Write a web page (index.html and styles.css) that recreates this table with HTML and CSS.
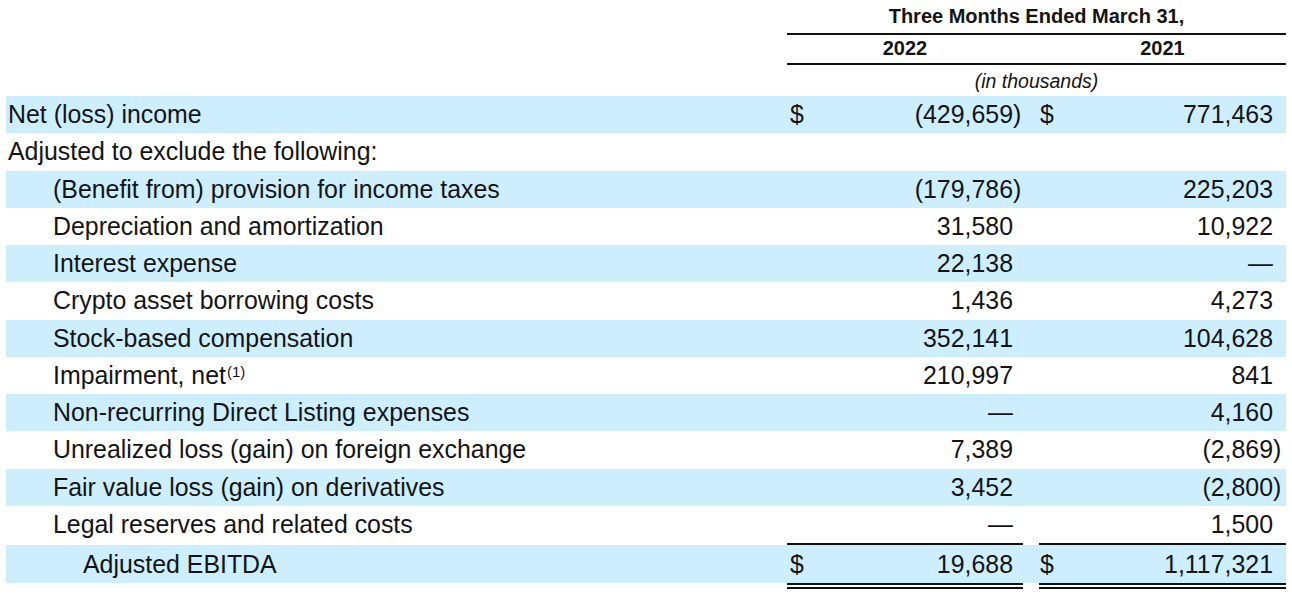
FILE: index.html
```html
<!DOCTYPE html>
<html lang="en">
<head>
<meta charset="utf-8">
<title>Adjusted EBITDA</title>
<link rel="stylesheet" href="styles.css">
</head>
<body>
<div class="sheet">
  <div class="hrow h1">
    <div class="lbl"></div>
    <div class="span title">Three Months Ended March 31,</div>
  </div>
  <div class="hrow h2">
    <div class="lbl"></div>
    <div class="yr">2022</div>
    <div class="gapc"></div>
    <div class="yr">2021</div>
  </div>
  <div class="hrow h3">
    <div class="lbl"></div>
    <div class="span unit">(in thousands)</div>
  </div>

  <div class="row blue">
    <div class="lbl">Net (loss) income</div>
    <div class="val c1"><span class="cur">$</span><span class="num">(429,659</span><span class="cp">)</span></div>
    <div class="gapc"></div>
    <div class="val c2"><span class="cur">$</span><span class="num">771,463</span><span class="cp"></span></div>
  </div>
  <div class="row">
    <div class="lbl">Adjusted to exclude the following:</div>
    <div class="val c1"></div>
    <div class="gapc"></div>
    <div class="val c2"></div>
  </div>
  <div class="row blue">
    <div class="lbl in1">(Benefit from) provision for income taxes</div>
    <div class="val c1"><span class="num">(179,786</span><span class="cp">)</span></div>
    <div class="gapc"></div>
    <div class="val c2"><span class="num">225,203</span><span class="cp"></span></div>
  </div>
  <div class="row">
    <div class="lbl in1">Depreciation and amortization</div>
    <div class="val c1"><span class="num">31,580</span><span class="cp"></span></div>
    <div class="gapc"></div>
    <div class="val c2"><span class="num">10,922</span><span class="cp"></span></div>
  </div>
  <div class="row blue">
    <div class="lbl in1">Interest expense</div>
    <div class="val c1"><span class="num">22,138</span><span class="cp"></span></div>
    <div class="gapc"></div>
    <div class="val c2"><span class="num">—</span><span class="cp"></span></div>
  </div>
  <div class="row">
    <div class="lbl in1">Crypto asset borrowing costs</div>
    <div class="val c1"><span class="num">1,436</span><span class="cp"></span></div>
    <div class="gapc"></div>
    <div class="val c2"><span class="num">4,273</span><span class="cp"></span></div>
  </div>
  <div class="row blue">
    <div class="lbl in1">Stock-based compensation</div>
    <div class="val c1"><span class="num">352,141</span><span class="cp"></span></div>
    <div class="gapc"></div>
    <div class="val c2"><span class="num">104,628</span><span class="cp"></span></div>
  </div>
  <div class="row">
    <div class="lbl in1">Impairment, net<sup class="fn">(1)</sup></div>
    <div class="val c1"><span class="num">210,997</span><span class="cp"></span></div>
    <div class="gapc"></div>
    <div class="val c2"><span class="num">841</span><span class="cp"></span></div>
  </div>
  <div class="row blue">
    <div class="lbl in1">Non-recurring Direct Listing expenses</div>
    <div class="val c1"><span class="num">—</span><span class="cp"></span></div>
    <div class="gapc"></div>
    <div class="val c2"><span class="num">4,160</span><span class="cp"></span></div>
  </div>
  <div class="row">
    <div class="lbl in1">Unrealized loss (gain) on foreign exchange</div>
    <div class="val c1"><span class="num">7,389</span><span class="cp"></span></div>
    <div class="gapc"></div>
    <div class="val c2"><span class="num">(2,869</span><span class="cp">)</span></div>
  </div>
  <div class="row blue">
    <div class="lbl in1">Fair value loss (gain) on derivatives</div>
    <div class="val c1"><span class="num">3,452</span><span class="cp"></span></div>
    <div class="gapc"></div>
    <div class="val c2"><span class="num">(2,800</span><span class="cp">)</span></div>
  </div>
  <div class="row">
    <div class="lbl in1">Legal reserves and related costs</div>
    <div class="val c1"><span class="num">—</span><span class="cp"></span></div>
    <div class="gapc"></div>
    <div class="val c2"><span class="num">1,500</span><span class="cp"></span></div>
  </div>
  <div class="row blue total">
    <div class="lbl in2">Adjusted EBITDA</div>
    <div class="val c1 tot"><span class="cur">$</span><span class="num">19,688</span><span class="cp"></span></div>
    <div class="gapc"></div>
    <div class="val c2 tot"><span class="cur">$</span><span class="num">1,117,321</span><span class="cp"></span></div>
  </div>
</div>
</body>
</html>
```

FILE: styles.css
```css
html, body {
  margin: 0;
  padding: 0;
  background: #ffffff;
}

body {
  font-family: "Liberation Sans", Arial, sans-serif;
  color: #141414;
}

.sheet {
  width: 1280px;
  padding-left: 6px;
}

.hrow,
.row {
  display: grid;
  grid-template-columns: 781px 236px 16px 247px;
}

.span {
  grid-column: 2 / 5;
  text-align: center;
}

.h1 {
  height: 35px;
}

.h1 .title {
  font-weight: bold;
  font-size: 20px;
  line-height: 33px;
  border-bottom: 2px solid #111111;
}

.h2 {
  height: 30px;
}

.h2 .yr,
.h2 .gapc {
  font-weight: bold;
  font-size: 20px;
  line-height: 27px;
  text-align: center;
  border-bottom: 2px solid #111111;
}

.h3 {
  height: 31px;
}

.h3 .unit {
  font-style: italic;
  font-size: 19.5px;
  line-height: 33px;
}

.row {
  height: 37.25px;
  font-size: 24.9px;
  align-items: center;
}

.row > div {
  height: 100%;
  display: flex;
  align-items: center;
  box-sizing: border-box;
}

.blue > div {
  background: #cceeff;
  background-clip: padding-box;
}

.lbl {
  padding-left: 2px;
  white-space: nowrap;
}

.lbl.in1 {
  padding-left: 47px;
}

.lbl.in2 {
  padding-left: 77px;
}

.fn {
  font-size: 15px;
  position: relative;
  top: -4px;
  margin-left: 1px;
}

.val .cur {
  margin-right: auto;
}

.val .num {
  margin-left: auto;
  white-space: nowrap;
}

.c1 .cur {
  padding-left: 3px;
}

.c2 .cur {
  padding-left: 1px;
}

.c1 .cp {
  width: 10px;
}

.c2 .cp {
  width: 13px;
}

.total {
  height: 46px;
}

.val.tot {
  border-top: 2px solid #111111;
  border-bottom: 6px double #111111;
}

.total .lbl,
.total .gapc {
  border-top: 2px solid transparent;
  border-bottom: 6px solid transparent;
}
```
